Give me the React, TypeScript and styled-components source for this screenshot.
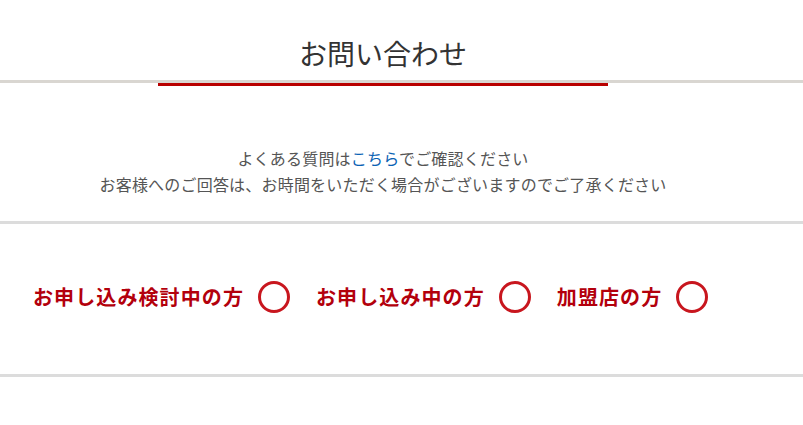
import * as React from 'react';
import styled, { createGlobalStyle } from 'styled-components';

const GlobalStyle = createGlobalStyle`
	html, body {
		margin: 0;
		padding: 0;
		background: #fff;
	}
	body {
		font-family: "Noto Sans CJK JP", "Noto Sans", sans-serif;
		color: #444;
	}
`;

const Page = styled.div`
	width: 803px;
	overflow: hidden;
`;

const Header = styled.header`
	height: 80px;
	border-bottom: 3px solid #d9d6d1;
`;

const HeaderInner = styled.div`
	width: 766px;
	height: 100%;
	display: flex;
	justify-content: center;
	align-items: flex-end;
`;

const Title = styled.h1`
	width: 450px;
	margin: 0 0 -6px;
	padding: 33px 0 13px;
	text-align: center;
	font-size: 28px;
	line-height: 34px;
	font-weight: 400;
	color: #333;
	border-bottom: 3px solid #b80000;
	position: relative;
`;

const Intro = styled.section`
	padding: 62px 0 24px;
	border-bottom: 3px solid #dcdcdc;
`;

const IntroText = styled.p`
	width: 766px;
	margin: 0;
	text-align: center;
	font-size: 16px;
	letter-spacing: 0.2px;
	line-height: 26px;
	color: #555;
`;

const Link = styled.a`
	color: #0a62b4;
	text-decoration: none;
`;

const Options = styled.section`
	padding: 57px 0 61px 33px;
	border-bottom: 3px solid #dcdcdc;
`;

const OptionList = styled.div`
	display: flex;
	align-items: center;
	gap: 26px;
`;

const Option = styled.label`
	display: flex;
	align-items: center;
	gap: 14px;
	cursor: pointer;
`;

const OptionLabel = styled.span`
	font-size: 20px;
	letter-spacing: 1.1px;
	line-height: 32px;
	font-weight: 700;
	color: #b3000c;
	white-space: nowrap;
`;

const Radio = styled.span`
	width: 32px;
	height: 32px;
	box-sizing: border-box;
	border: 3px solid #c8161e;
	border-radius: 50%;
	background: #fff;
`;

const options = ['お申し込み検討中の方', 'お申し込み中の方', '加盟店の方'];

const App = (): JSX.Element => {
	return (
		<>
			<GlobalStyle />
			<Page>
				<Header>
					<HeaderInner>
						<Title>お問い合わせ</Title>
					</HeaderInner>
				</Header>
				<Intro>
					<IntroText>
						よくある質問は<Link href="#">こちら</Link>でご確認ください
						<br />
						お客様へのご回答は、お時間をいただく場合がございますのでご了承ください
					</IntroText>
				</Intro>
				<Options>
					<OptionList>
						{options.map((label) => (
							<Option key={label}>
								<OptionLabel>{label}</OptionLabel>
								<Radio />
							</Option>
						))}
					</OptionList>
				</Options>
			</Page>
		</>
	);
};

export default App;
